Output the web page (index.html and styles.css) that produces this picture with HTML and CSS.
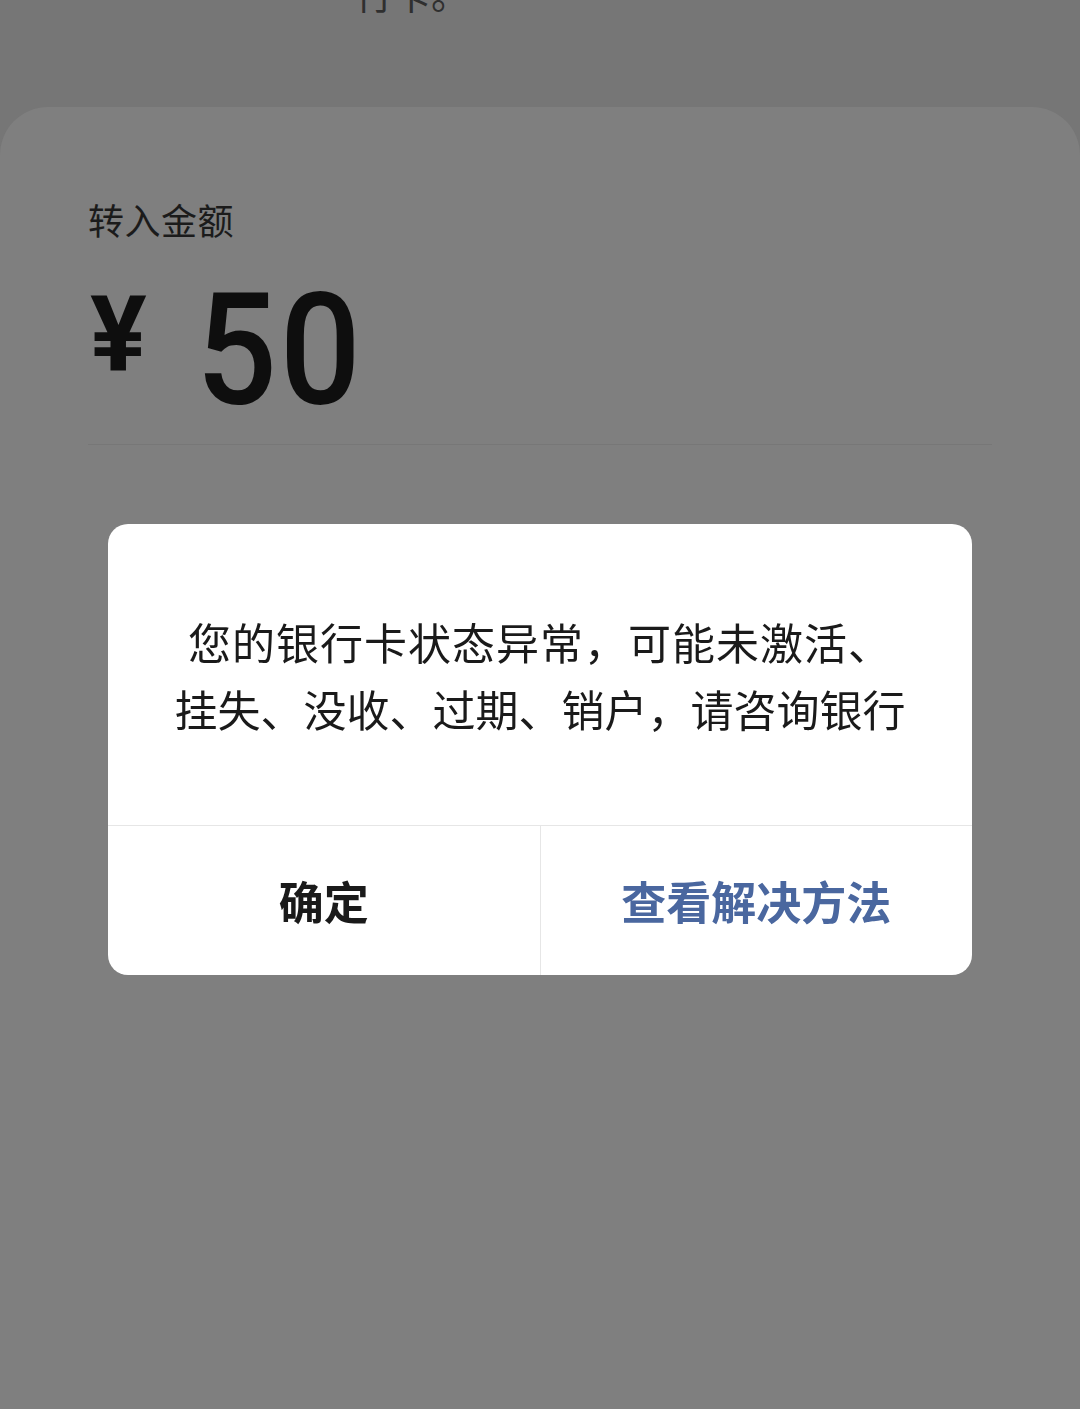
FILE: index.html
```html
<!DOCTYPE html>
<html lang="zh-CN">
<head>
<meta charset="utf-8">
<title>转入金额</title>
<link rel="stylesheet" href="styles.css">
</head>
<body>
<div class="page">
  <div class="top">
    <p class="top-text">行卡。</p>
  </div>
  <div class="card">
    <div class="label">转入金额</div>
    <div class="amount">
      <span class="yen">¥</span>
      <span class="num">50</span>
    </div>
    <div class="divider"></div>
  </div>
</div>
<div class="dialog">
  <div class="msg">
    <span class="l1">您的银行卡状态异常，可能未激活、</span><br>
    <span class="l2">挂失、没收、过期、销户，请咨询银行</span>
  </div>
  <div class="btns">
    <div class="btn ok">确定</div>
    <div class="btn link">查看解决方法</div>
  </div>
</div>
</body>
</html>
```

FILE: styles.css
```css
html, body {
  margin: 0;
  padding: 0;
}
body {
  background: #767676;
  font-family: "Noto Sans CJK SC", "Noto Sans", sans-serif;
  width: 1080px;
  height: 1409px;
  overflow: hidden;
}
.page {
  display: flex;
  flex-direction: column;
  height: 1409px;
}
.top {
  height: 107px;
  overflow: hidden;
  flex: none;
}
.top-text {
  margin: -26px 0 0 355px;
  font-size: 38px;
  line-height: 38px;
  color: #2f2f2f;
}
.card {
  flex: 1;
  background: #7f7f7f;
  border-radius: 48px 48px 0 0;
  padding: 88px 88px 0 88px;
}
.label {
  font-size: 36px;
  line-height: 48px;
  color: #1b1b1b;
  letter-spacing: 0.5px;
}
.amount {
  display: flex;
  align-items: flex-start;
  margin-top: 30px;
  color: #0e0e0e;
  font-family: Roboto, "Liberation Sans", sans-serif;
}
.yen {
  font-size: 106px;
  line-height: 106px;
  font-weight: 700;
  margin-top: 9px;
  margin-left: 2px;
}
.num {
  display: inline-block;
  font-size: 155px;
  line-height: 155px;
  font-weight: 500;
  margin-left: 49px;
  letter-spacing: 3px;
  transform: scaleX(0.92);
  transform-origin: left top;
}
.divider {
  margin-top: 16px;
  height: 1px;
  background: #777777;
  width: 904px;
}
.dialog {
  position: fixed;
  top: 524px;
  left: 108px;
  width: 864px;
  height: 451px;
  background: #ffffff;
  border-radius: 20px;
  overflow: hidden;
  display: flex;
  flex-direction: column;
}
.msg {
  height: 302px;
  box-sizing: border-box;
  padding-top: 84px;
  text-align: center;
  font-size: 43px;
  line-height: 67px;
  color: #1a1a1a;
  border-bottom: 1px solid #e6e6e6;
  white-space: nowrap;
}
.l1 {
  letter-spacing: 1px;
}
.btns {
  flex: 1;
  display: flex;
}
.btn {
  flex: 1;
  display: flex;
  align-items: center;
  justify-content: center;
  font-size: 45px;
  font-weight: 700;
}
.ok {
  color: #1a1a1a;
  border-right: 1px solid #e6e6e6;
}
.link {
  color: #4a679f;
}
```
